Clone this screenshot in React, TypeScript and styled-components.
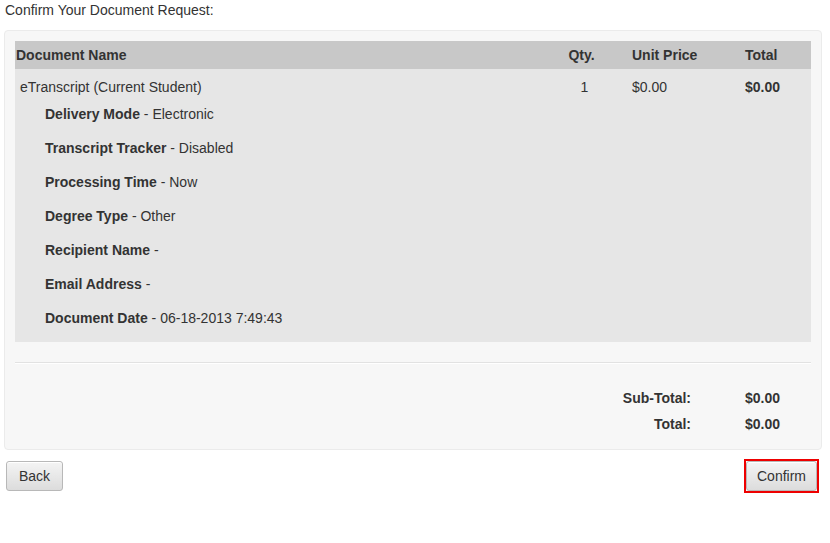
import * as React from "react";
import styled, {createGlobalStyle} from "styled-components";

const GlobalStyle = createGlobalStyle`
  body {
    margin: 0;
    background: #FFFFFF;
    font-family: "Liberation Sans", Arial, sans-serif;
    font-size: 14px;
    color: #333333;
  }
`;

const Page = styled.div`
  width: 830px;
  padding: 2px 8px 0 4px;
  box-sizing: border-box;
`;

const Heading = styled.div`
  padding-left: 1px;
  line-height: 17px;
  margin-bottom: 11px;
`;

const Card = styled.div`
  background: #F7F7F7;
  border: 1px solid #EBEBEB;
  border-radius: 4px;
  padding: 10px 10px 0 10px;
`;

const Grid = styled.div`
  display: grid;
  grid-template-columns: 1fr 75px 113px 66px;
`;

const HeadRow = styled(Grid)`
  background: #C8C8C8;
  height: 28px;
  align-items: center;
  font-weight: bold;
`;

const Body = styled.div`
  background: #E6E6E6;
  padding: 10px 0 7px 0;
`;

const Cell = styled.div<{$align?: string; $pad?: string; $bold?: boolean}>`
  text-align: ${p => p.$align || "left"};
  padding: ${p => p.$pad || "0"};
  font-weight: ${p => (p.$bold ? "bold" : "inherit")};
  line-height: 17px;
`;

const DetailList = styled.div`
  padding: 1px 0 0 30px;
`;

const Detail = styled.div`
  height: 34px;
  line-height: 34px;
  & b {
    font-weight: bold;
  }
`;

const Divider = styled.div`
  margin-top: 20px;
  border-top: 1px solid #E2E2E2;
  border-bottom: 1px solid #FFFFFF;
`;

const Totals = styled.div`
  display: grid;
  grid-template-columns: 1fr 66px;
  column-gap: 54px;
  row-gap: 9px;
  padding: 26px 0 16px 0;
  font-weight: bold;
  line-height: 17px;
  & > :nth-child(odd) {
    text-align: right;
  }
`;

const Actions = styled.div`
  display: flex;
  justify-content: space-between;
  align-items: center;
  margin-top: 9px;
  padding: 0 3px 0 2px;
`;

const Button = styled.button<{$pad?: number}>`
  font-family: "Liberation Sans", Arial, sans-serif;
  font-size: 14px;
  color: #333333;
  height: 30px;
  padding: 0 ${p => p.$pad ?? 12}px;
  border: 1px solid #B8B8B8;
  border-radius: 3px;
  background: linear-gradient(#F4F4F4, #DCDCDC);
  box-shadow: inset 0 1px 0 #FFFFFF;
  cursor: pointer;
`;

const Highlight = styled.div`
  border: 2px solid #EE0000;
  display: flex;
`;

const details: [string, string][] = [
  ["Delivery Mode", "Electronic"],
  ["Transcript Tracker", "Disabled"],
  ["Processing Time", "Now"],
  ["Degree Type", "Other"],
  ["Recipient Name", ""],
  ["Email Address", ""],
  ["Document Date", "06-18-2013 7:49:43"],
];

const App = () => {
  return (
    <Page>
      <GlobalStyle/>
      <Heading>Confirm Your Document Request:</Heading>
      <Card>
        <HeadRow>
          <Cell $pad="0 0 0 1px">Document Name</Cell>
          <Cell $align="center" $pad="0 26px 0 0">Qty.</Cell>
          <Cell>Unit Price</Cell>
          <Cell>Total</Cell>
        </HeadRow>
        <Body>
          <Grid>
            <Cell $pad="0 0 0 5px">eTranscript (Current Student)</Cell>
            <Cell $align="center" $pad="0 20px 0 0">1</Cell>
            <Cell>$0.00</Cell>
            <Cell $bold>$0.00</Cell>
          </Grid>
          <DetailList>
            {details.map(([label, value]) => (
              <Detail key={label}>
                <b>{label}</b> - {value}
              </Detail>
            ))}
          </DetailList>
        </Body>
        <Divider/>
        <Totals>
          <div>Sub-Total:</div>
          <div>$0.00</div>
          <div>Total:</div>
          <div>$0.00</div>
        </Totals>
      </Card>
      <Actions>
        <Button>Back</Button>
        <Highlight>
          <Button $pad={10}>Confirm</Button>
        </Highlight>
      </Actions>
    </Page>
  );
};

export default App;
